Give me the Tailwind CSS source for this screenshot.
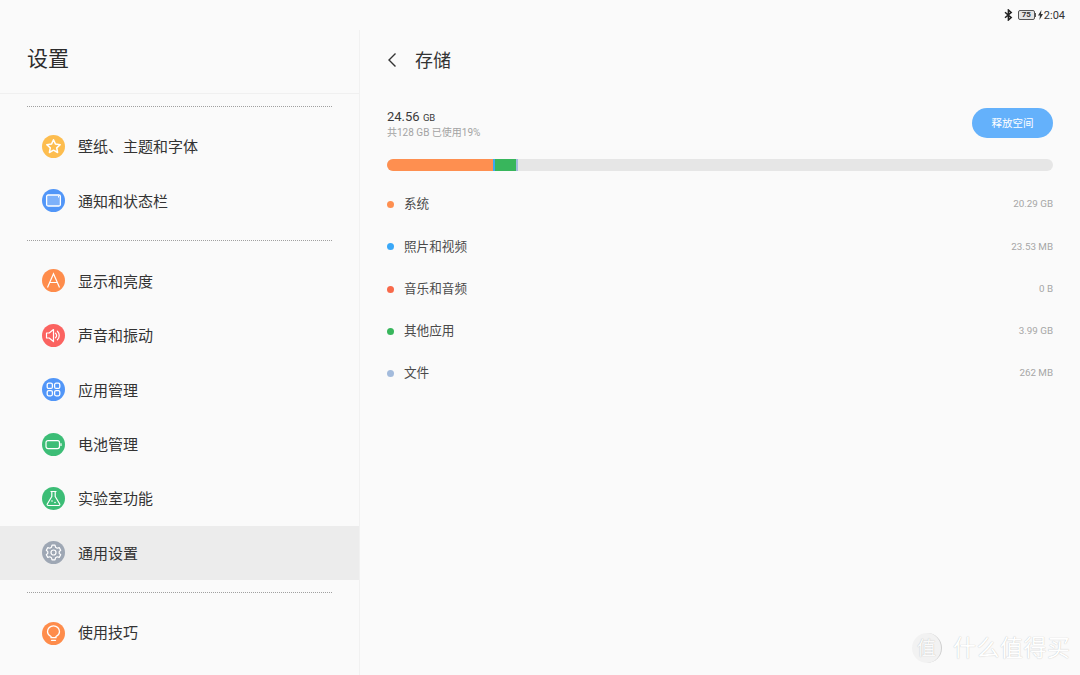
<!DOCTYPE html>
<html lang="zh-CN">
<head>
  <meta charset="UTF-8" />
  <title>存储</title>
  <script src="https://cdn.jsdelivr.net/npm/@tailwindcss/browser@4"></script>
</head>
<body class="bg-[#fafafa] text-[#333] font-['Roboto','Noto_Sans_CJK_SC',sans-serif] overflow-hidden">
<div class="relative w-[1080px] h-[675px] overflow-hidden flex flex-col">

  <!-- Status bar -->
  <div class="h-[30px] shrink-0 flex items-center justify-end pr-[15px] text-[#333]">
    <svg class="w-[9px] h-[12px] mr-[5px]" viewBox="0 0 9 12" fill="none" stroke="#222" stroke-width="1.500"><path d="M1 3.2 7.2 8.6 4.4 11V1l2.800 2.400L1 8.800"/></svg>
    <div class="w-[17px] h-[10px] border border-[#555] rounded-[2px] bg-[#e4e4e4] text-[8px] leading-[8px] font-bold text-center">75</div>
    <div class="w-[1px] h-[4px] bg-[#555] mr-[2px]"></div>
    <svg class="w-[5px] h-[10px] mr-[1px]" viewBox="0 0 5 10" fill="#333"><path d="M3.400 0 0 5.600h2L1.400 10 5 4H3z"/></svg>
    <span class="text-[11px] leading-none">2:04</span>
  </div>

  <div class="flex flex-1 min-h-0">
    <!-- Sidebar -->
    <aside class="w-[360px] shrink-0 border-r border-[#f1f1f1] overflow-hidden">
      <div class="h-[64px] border-b border-[#f0f0f0] flex items-center pl-[27px] pb-[4px]">
        <h1 class="text-[21px] text-[#2c2c2c]">设置</h1>
      </div>

      <div class="mx-[27px] mt-[12px] border-t border-dotted border-[#a0a0a0]"></div>
      <div class="mt-[12px]">
        <div class="h-[54.4px] flex items-center pl-[42px] gap-[13px] text-[15px]">
          <div class="w-[23px] h-[23px] rounded-full bg-[#fdbd4f] flex items-center justify-center">
            <svg class="w-[17px] h-[17px]" viewBox="0 0 17 17" fill="none" stroke="#fff" stroke-width="1.500" stroke-linejoin="round"><path d="M8.500 1.800l2 4.300 4.700.6-3.500 3.200.9 4.600-4.100-2.300-4.100 2.300.9-4.600L1.800 6.700l4.700-.6z"/></svg>
          </div>
          <span class="pt-[2px]">壁纸、主题和字体</span>
        </div>
        <div class="h-[54.4px] flex items-center pl-[42px] gap-[13px] text-[15px]">
          <div class="w-[23px] h-[23px] rounded-full bg-[#5196f8] flex items-center justify-center">
            <svg class="w-[17px] h-[17px]" viewBox="0 0 17 17" fill="none" stroke="#fff" stroke-width="1.300"><rect x="1.600" y="3" width="13.800" height="11" rx="1.500" fill="#7db1fa"/><path d="M13 4.800h1" stroke-width="1.400"/></svg>
          </div>
          <span class="pt-[3px]">通知和状态栏</span>
        </div>
      </div>

      <div class="mx-[27px] mt-[12px] border-t border-dotted border-[#a0a0a0]"></div>
      <div class="mt-[13px]">
        <div class="h-[54.4px] flex items-center pl-[42px] gap-[13px] text-[15px]">
          <div class="w-[23px] h-[23px] rounded-full bg-[#fe8c4b] flex items-center justify-center">
            <svg class="w-[17px] h-[17px]" viewBox="0 0 17 17" fill="none" stroke="#fff" stroke-width="1.200"><path d="M2.500 15.500 8.500 1.800l6 13.700M4.400 10.500h8.200"/></svg>
          </div>
          <span class="pt-[2px]">显示和亮度</span>
        </div>
        <div class="h-[54.4px] flex items-center pl-[42px] gap-[13px] text-[15px]">
          <div class="w-[23px] h-[23px] rounded-full bg-[#fb6360] flex items-center justify-center">
            <svg class="w-[17px] h-[17px]" viewBox="0 0 17 17" fill="none" stroke="#fff" stroke-width="1.200" stroke-linejoin="round"><path d="M1.500 6v5h2.700l4.300 3.500v-12L4.200 6z"/><path d="M10.500 6.200a3 3 0 0 1 0 4.600M12.400 4.200a6 6 0 0 1 0 8.600" stroke-linecap="round"/></svg>
          </div>
          <span class="pt-[1px]">声音和振动</span>
        </div>
        <div class="h-[54.4px] flex items-center pl-[42px] gap-[13px] text-[15px]">
          <div class="w-[23px] h-[23px] rounded-full bg-[#5196f8] flex items-center justify-center">
            <svg class="w-[17px] h-[17px]" viewBox="0 0 17 17" fill="none" stroke="#fff" stroke-width="1.300"><rect x="2.200" y="2.200" width="5.200" height="5.200" rx="1.500"/><rect x="9.600" y="2.200" width="5.200" height="5.200" rx="1.500"/><rect x="2.200" y="9.600" width="5.200" height="5.200" rx="1.500"/><rect x="9.600" y="9.600" width="5.200" height="5.200" rx="1.500"/></svg>
          </div>
          <span class="pt-[2px]">应用管理</span>
        </div>
        <div class="h-[54.4px] flex items-center pl-[42px] gap-[13px] text-[15px]">
          <div class="w-[23px] h-[23px] rounded-full bg-[#3cbd76] flex items-center justify-center">
            <svg class="w-[17px] h-[17px]" viewBox="0 0 17 17" fill="none" stroke="#fff" stroke-width="1.200"><rect x="1" y="4.600" width="13.500" height="8" rx="2"/><path d="M16 7.200v2.800"/></svg>
          </div>
          <span class="pt-[2px]">电池管理</span>
        </div>
        <div class="h-[54.4px] flex items-center pl-[42px] gap-[13px] text-[15px]">
          <div class="w-[23px] h-[23px] rounded-full bg-[#3cbd76] flex items-center justify-center">
            <svg class="w-[17px] h-[17px]" viewBox="0 0 17 17" fill="none" stroke="#fff" stroke-width="1.200" stroke-linejoin="round"><path d="M5.500 1.500h6M6.800 1.500v5L2.300 14a1 1 0 0 0 .9 1.500h10.600a1 1 0 0 0 .9-1.500l-4.500-7.500v-5"/><circle cx="7" cy="11" r=".8" fill="#fff" stroke="none"/><circle cx="10" cy="12.500" r=".8" fill="#fff" stroke="none"/></svg>
          </div>
          <span class="pt-[1px]">实验室功能</span>
        </div>
        <div class="h-[54.4px] flex items-center pl-[42px] gap-[13px] text-[15px] bg-[#ececec]">
          <div class="w-[23px] h-[23px] rounded-full bg-[#9ea7b4] flex items-center justify-center">
            <svg class="w-[17px] h-[17px]" viewBox="0 0 17 17" fill="none" stroke="#fff" stroke-width="1.200" stroke-linejoin="round"><path d="M7 1.700h3l.5 2 1.700 1 2-.6 1.500 2.600-1.500 1.400v1.800l1.500 1.400-1.500 2.600-2-.6-1.700 1-.5 2H7l-.5-2-1.700-1-2 .6-1.500-2.600L2.800 9.900V8.100L1.300 6.700l1.500-2.600 2 .6 1.700-1z" transform="translate(0 -.5)"/><circle cx="8.500" cy="8.500" r="2.500"/></svg>
          </div>
          <span class="pt-[2px]">通用设置</span>
        </div>
      </div>

      <div class="mx-[27px] mt-[12px] border-t border-dotted border-[#a0a0a0]"></div>
      <div class="mt-[13px]">
        <div class="h-[54.4px] flex items-center pl-[42px] gap-[13px] text-[15px]">
          <div class="w-[23px] h-[23px] rounded-full bg-[#fe8c4b] flex items-center justify-center">
            <svg class="w-[17px] h-[17px]" viewBox="0 0 17 17" fill="none" stroke="#fff" stroke-width="1.300"><path d="M6 12.600V11.500C4 10.500 2.500 8.900 2.500 6.800a6 6 0 0 1 12 0c0 2.100-1.500 3.700-3.500 4.700v1.100z"/><path d="M6.500 15.300h4" stroke-linecap="round"/></svg>
          </div>
          <span>使用技巧</span>
        </div>
      </div>
    </aside>

    <!-- Storage detail -->
    <main class="flex-1 pl-[27px] pr-[27px]">
      <div class="h-[60px] flex items-center">
        <svg class="w-[10px] h-[16px]" viewBox="0 0 10 16" fill="none" stroke="#333" stroke-width="1.400"><path d="M8.500 1.500 2 8l6.500 6.500"/></svg>
        <h2 class="ml-[18px] text-[18px] text-[#333]">存储</h2>
      </div>

      <div class="mt-[18px] h-[30px] flex items-center justify-between">
        <div class="pt-[2px]">
          <div class="text-[13px] leading-[16px] text-[#3a3a3a]">24.56 <span class="text-[9.500px]">GB</span></div>
          <div class="text-[10px] leading-[14px] text-[#a3a3a3]">共128 GB 已使用19%</div>
        </div>
        <button class="w-[81px] h-[30px] pt-[1px] rounded-full bg-[#64b1fb] text-white text-[10.500px]">释放空间</button>
      </div>

      <div class="mt-[21px] h-[12px] rounded-full bg-[#e6e6e6] overflow-hidden flex">
        <div class="w-[106px] bg-[#fe8f50]"></div>
        <div class="w-[2px] bg-[#3aa8f0]"></div>
        <div class="w-[21px] bg-[#38b65c]"></div>
        <div class="w-[2px] bg-[#a3bbdc]"></div>
      </div>

      <div class="mt-[12px] text-[12.600px] text-[#4a4a4a]">
        <div class="h-[42.300px] flex items-center pt-[1px]">
          <span class="w-[7px] h-[7px] rounded-full bg-[#fe8f50]"></span>
          <span class="ml-[10px] flex-1">系统</span>
          <span class="text-[9.800px] text-[#a6a6a6]">20.29 GB</span>
        </div>
        <div class="h-[42.300px] flex items-center pt-[1px]">
          <span class="w-[7px] h-[7px] rounded-full bg-[#3aa8f8]"></span>
          <span class="ml-[10px] flex-1">照片和视频</span>
          <span class="text-[9.800px] text-[#a6a6a6]">23.53 MB</span>
        </div>
        <div class="h-[42.300px] flex items-center pt-[1px]">
          <span class="w-[7px] h-[7px] rounded-full bg-[#f8694a]"></span>
          <span class="ml-[10px] flex-1">音乐和音频</span>
          <span class="text-[9.800px] text-[#a6a6a6]">0 B</span>
        </div>
        <div class="h-[42.300px] flex items-center pt-[1px]">
          <span class="w-[7px] h-[7px] rounded-full bg-[#38b65c]"></span>
          <span class="ml-[10px] flex-1">其他应用</span>
          <span class="text-[9.800px] text-[#a6a6a6]">3.99 GB</span>
        </div>
        <div class="h-[42.300px] flex items-center pt-[1px]">
          <span class="w-[7px] h-[7px] rounded-full bg-[#a3bbdc]"></span>
          <span class="ml-[10px] flex-1">文件</span>
          <span class="text-[9.800px] text-[#a6a6a6]">262 MB</span>
        </div>
      </div>
    </main>
  </div>

  <!-- Watermark -->
  <div class="absolute left-[912px] top-[633px] flex items-center text-white [text-shadow:0_0_1px_#b4b4b4]">
    <div class="w-[30px] h-[30px] rounded-full bg-[#f2f2f2] border-r border-[#cfcfcf] flex items-center justify-center text-[19px] leading-none text-[#fafafa]">值</div>
    <span class="ml-[11px] text-[23px] leading-none tracking-[0.5px]">什么值得买</span>
  </div>
</div>
</body>
</html>
